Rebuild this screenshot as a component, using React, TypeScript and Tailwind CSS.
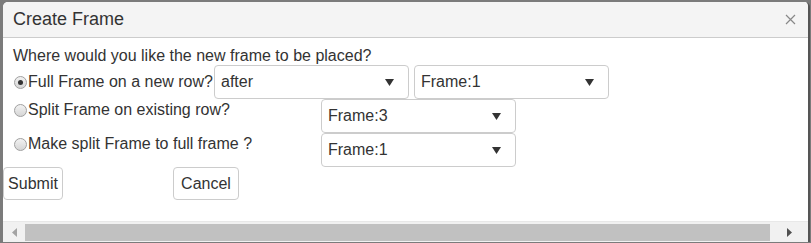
import React from "react";

function Radio({ checked }: { checked?: boolean }) {
  return (
    <span className="mt-px flex h-[13px] w-[13px] shrink-0 items-center justify-center rounded-full border border-[#a0a0a0] bg-gradient-to-b from-[#f2f2f2] to-[#d6d6d6]">
      {checked && <span className="h-[5px] w-[5px] rounded-full bg-[#333]" />}
    </span>
  );
}

function Select({ value, className }: { value: string; className?: string }) {
  return (
    <div
      className={
        "flex h-[34px] w-[195px] shrink-0 items-center justify-between rounded-[4px] border border-[#ccc] bg-white pl-[6px] pr-[14px] text-[16px] text-[#333] " +
        (className ?? "")
      }
    >
      <span>{value}</span>
      <svg width="9" height="7" viewBox="0 0 9 7">
        <path d="M0 0 H9 L4.5 7 Z" fill="#333" />
      </svg>
    </div>
  );
}

export default function App() {
  return (
    <div className="h-[243px] w-[811px] overflow-hidden bg-[#7b7b7b] pl-[3px] pr-[1px] pt-[2px] font-['Liberation_Sans',Arial,sans-serif]">
      <div className="flex h-[240px] flex-col overflow-hidden rounded-t-[5px] border-r-2 border-[#555] bg-white">
        <div className="flex h-[36px] shrink-0 items-center justify-between border-b border-[#ccc] bg-[#f4f4f4] pl-[10px] pr-[12px]">
          <span className="text-[18px] text-[#333]">Create Frame</span>
          <svg width="11" height="11" viewBox="0 0 11 11">
            <path d="M1 1 L10 10 M10 1 L1 10" stroke="#888" strokeWidth="1.2" />
          </svg>
        </div>

        <div className="flex flex-1 flex-col pt-[9px] text-[16px] leading-[18px] text-[#333]">
          <div className="pl-[10px]">Where would you like the new frame to be placed?</div>

          <div className="flex items-center">
            <div className="flex w-[211px] shrink-0 items-center whitespace-nowrap pl-[11px]">
              <Radio checked />
              <span className="ml-px">Full Frame on a new row?</span>
            </div>
            <Select value="after" />
            <Select value="Frame:1" className="ml-[5px]" />
          </div>

          <div className="flex items-start">
            <div className="flex w-[318px] shrink-0 items-center whitespace-nowrap pl-[11px] pt-[2px]">
              <Radio />
              <span className="ml-px">Split Frame on existing row?</span>
            </div>
            <Select value="Frame:3" />
          </div>

          <div className="flex items-start">
            <div className="flex w-[318px] shrink-0 items-center whitespace-nowrap pl-[11px] pt-[2px]">
              <Radio />
              <span className="ml-px">Make split Frame to full frame ?</span>
            </div>
            <Select value="Frame:1" />
          </div>

          <div className="flex items-center">
            <button className="h-[33px] w-[60px] rounded-[4px] border border-[#ccc] bg-white text-[16px] text-[#333]">
              Submit
            </button>
            <button className="ml-[110px] h-[33px] w-[66px] rounded-[4px] border border-[#ccc] bg-white text-[16px] text-[#333]">
              Cancel
            </button>
          </div>

          <div className="mt-auto flex h-[21px] items-center border-t border-[#e8e8e8] bg-[#f1f1f1]">
            <div className="flex w-[22px] justify-center">
              <svg width="5" height="9" viewBox="0 0 5 9">
                <path d="M5 0 V9 L0 4.5 Z" fill="#a3a3a3" />
              </svg>
            </div>
            <div className="h-[17px] flex-1 bg-[#c1c1c1]" />
            <div className="flex w-[38px] justify-center">
              <svg width="5" height="9" viewBox="0 0 5 9">
                <path d="M0 0 V9 L5 4.5 Z" fill="#505050" />
              </svg>
            </div>
          </div>
        </div>
      </div>
    </div>
  );
}
